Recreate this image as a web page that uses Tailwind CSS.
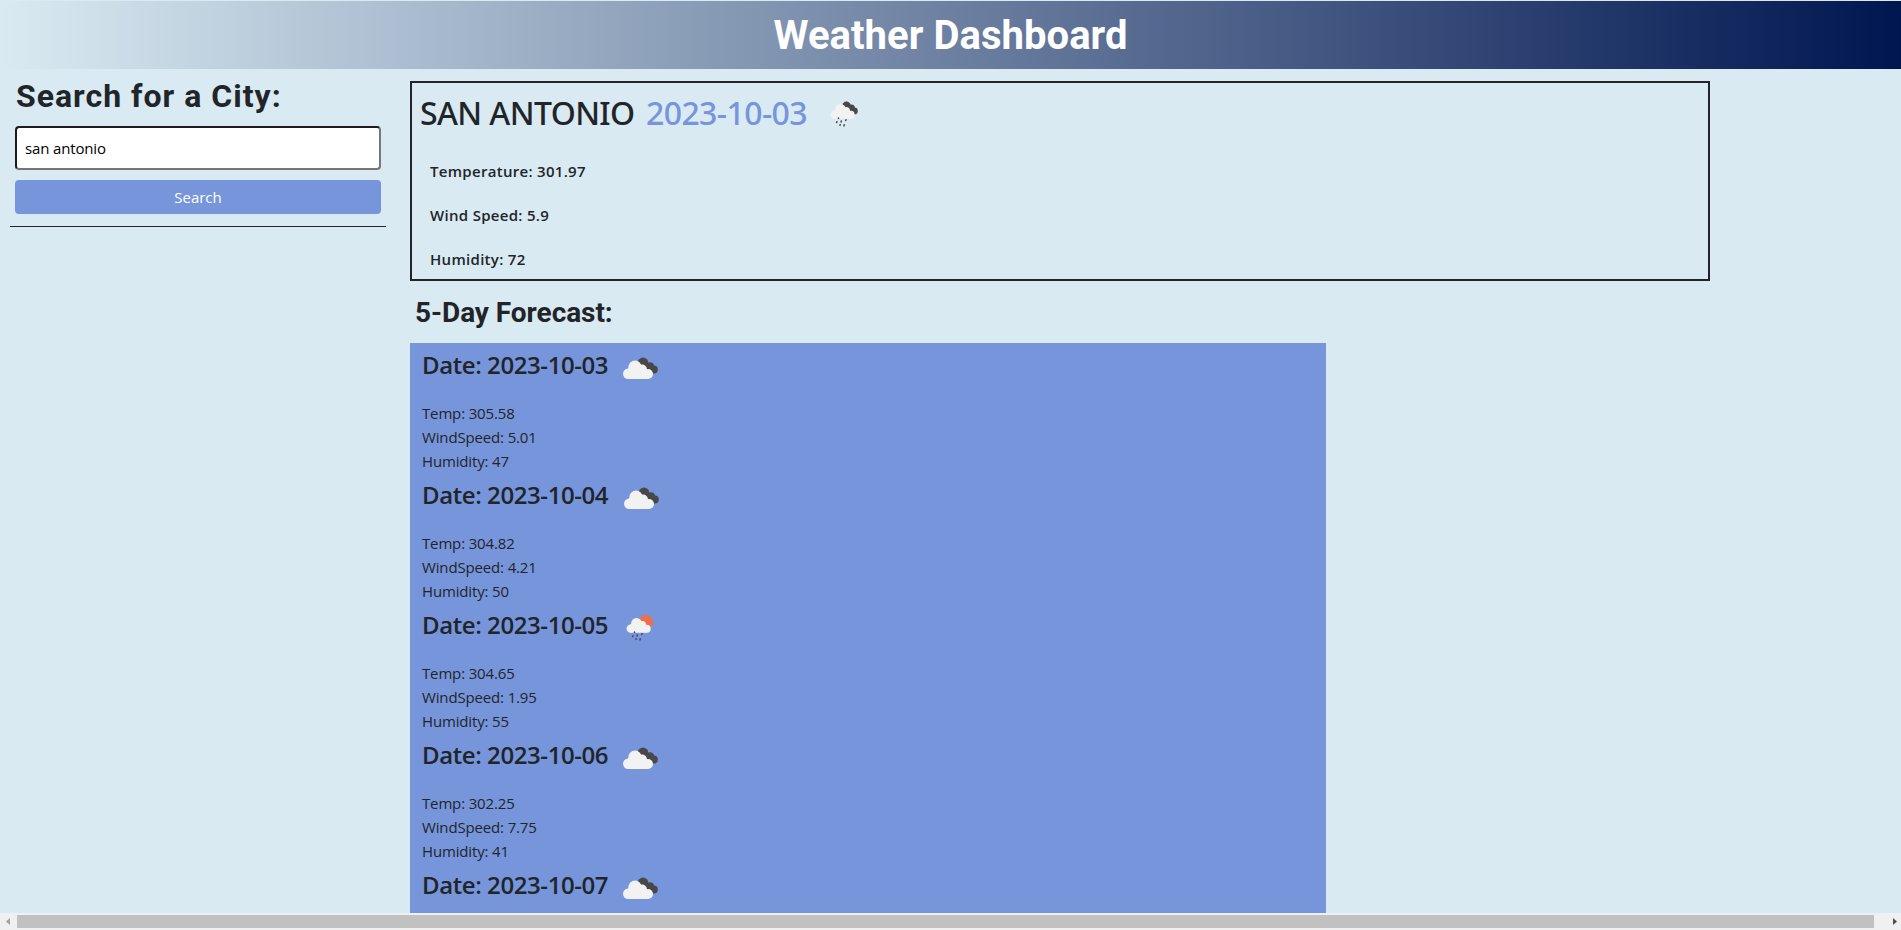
<!DOCTYPE html>
<html lang="en">
<head>
<meta charset="utf-8">
<title>Weather Dashboard</title>
<script src="https://cdn.jsdelivr.net/npm/@tailwindcss/browser@4"></script>
</head>
<body class="bg-[#d9eaf2] text-[#212529] font-['Open_Sans',sans-serif] overflow-hidden">
<svg class="hidden">
  <symbol id="clouds" viewBox="0 0 45 36">
    <g fill="#484849"><circle cx="25" cy="13" r="5.4"/><circle cx="32" cy="16.5" r="4.3"/><circle cx="35.8" cy="19.5" r="4"/><path d="M22 14L34 15L36 23L26 24Z"/></g>
    <g fill="#f2f2f2"><circle cx="10.2" cy="23.8" r="5.2"/><circle cx="17" cy="17.2" r="6.6"/><circle cx="24" cy="19.5" r="5"/><circle cx="30" cy="24" r="5"/><path d="M10 18H27L31 29H10Z"/></g>
  </symbol>
  <symbol id="cloud-small" viewBox="0 0 28 28">
    <g fill="#f2f2f2"><circle cx="4.7" cy="13.6" r="4.2"/><circle cx="10.5" cy="8.2" r="5.3"/><circle cx="16" cy="10" r="4"/><circle cx="20.7" cy="13.7" r="4"/><path d="M4.5 9H19L21 17.8H4.7Z"/></g>
    <g stroke="#484849" stroke-width="1.5" stroke-linecap="round"><path d="M8.5 17V17.6M6.9 20.8L6.6 21.6M11.3 20L11 20.9M16 18.8L15.7 19.5M10.2 23.6L10 24.2M14.2 23.8L14 24.9"/></g>
  </symbol>
</svg>
<div class="flex h-[930px] flex-col">
  <header class="mt-px h-[68px] shrink-0 bg-linear-to-r/srgb from-[#d9eaf2] to-[#001650] text-center font-[Roboto,sans-serif] text-[40px] leading-[69px] font-bold tracking-[0.05px] text-white">
    <h1>Weather Dashboard</h1>
  </header>
  <div class="flex min-h-0 flex-1 overflow-hidden">
    <aside class="w-[400px] shrink-0 pl-[10px]">
      <h2 class="mt-[7px] pl-1.5 font-[Roboto,sans-serif] text-[32px] leading-[40px] font-bold tracking-[1px]">Search for a City:</h2>
      <input class="mt-[10px] ml-[5px] block h-11 w-[366px] rounded-[4px] border-2 border-t-[#1c1c1e] border-l-[#1c1c1e] border-r-[#767676] border-b-[#767676] bg-white px-2 text-[15px] tracking-[-0.15px] text-black" value="san antonio">
      <button class="mt-[10px] ml-[5px] block h-[34px] w-[366px] rounded-[4px] bg-[#7795db] text-[15px] font-normal text-white">Search</button>
      <hr class="mt-3 w-[376px] border-[#212529]">
    </aside>
    <main class="ml-[10px] flex-1">
      <section class="mt-3 h-[200px] w-[1300px] border-2 border-[#212529] pl-[9px]">
        <div class="flex h-[60px] items-center font-['Noto_Sans',sans-serif] text-[32px] font-medium whitespace-pre"><h2 class="w-[226px] -ml-px tracking-[-0.6px]">SAN ANTONIO</h2><span class="w-[184px] tracking-[-0.6px] text-[#7795db]">2023-10-03</span>
<svg class="size-7 translate-y-[2px]"><g fill="#484849"><circle cx="16.5" cy="4.8" r="4.2"/><circle cx="21.3" cy="7.2" r="3.6"/><circle cx="24.4" cy="10" r="3.4"/><path d="M14 6L23 5L25 13L18 13Z"/></g><use href="#cloud-small"/></svg></div>
        <div class="mt-[16px] pl-[9px] text-[15px] font-semibold tracking-[0.3px]">
          <p class="h-11 leading-[44px] -mt-[10px]">Temperature: 301.97</p>
          <p class="h-11 leading-[44px]">Wind Speed: 5.9</p>
          <p class="h-11 leading-[44px]">Humidity: 72</p>
        </div>
      </section>
      <h2 class="mt-[14px] h-12 pl-[5px] font-[Roboto,sans-serif] text-[28px] leading-[35px] font-bold tracking-[-0.05px]">5-Day Forecast:</h2>
      <section class="w-[916px] bg-[#7795db] pl-3">
        <article class="h-[130px]">
          <div class="flex h-[58px] pt-[7px]"><h3 class="w-[196px] text-2xl leading-[30px] font-semibold tracking-[-0.42px]">Date: 2023-10-03</h3><svg class="h-9 w-[45px]"><use href="#clouds"/></svg></div>
          <p class="text-[15px] leading-6 tracking-[-0.15px]">Temp: 305.58</p><p class="text-[15px] leading-6 tracking-[-0.15px]">WindSpeed: 5.01</p><p class="text-[15px] leading-6 tracking-[-0.15px]">Humidity: 47</p>
        </article>
        <article class="h-[130px]">
          <div class="flex h-[58px] pt-[7px]"><h3 class="w-[197px] text-2xl leading-[30px] font-semibold tracking-[-0.42px]">Date: 2023-10-04</h3><svg class="h-9 w-[45px]"><use href="#clouds"/></svg></div>
          <p class="text-[15px] leading-6 tracking-[-0.15px]">Temp: 304.82</p><p class="text-[15px] leading-6 tracking-[-0.15px]">WindSpeed: 4.21</p><p class="text-[15px] leading-6 tracking-[-0.15px]">Humidity: 50</p>
        </article>
        <article class="h-[130px]">
          <div class="flex h-[58px] pt-[7px]"><h3 class="w-[204px] text-2xl leading-[30px] font-semibold tracking-[-0.42px]">Date: 2023-10-05</h3><svg class="mt-[5px] size-7"><circle cx="20" cy="7" r="7" fill="#ee6f4c"/><use href="#cloud-small"/></svg></div>
          <p class="text-[15px] leading-6 tracking-[-0.15px]">Temp: 304.65</p><p class="text-[15px] leading-6 tracking-[-0.15px]">WindSpeed: 1.95</p><p class="text-[15px] leading-6 tracking-[-0.15px]">Humidity: 55</p>
        </article>
        <article class="h-[130px]">
          <div class="flex h-[58px] pt-[7px]"><h3 class="w-[196px] text-2xl leading-[30px] font-semibold tracking-[-0.42px]">Date: 2023-10-06</h3><svg class="h-9 w-[45px]"><use href="#clouds"/></svg></div>
          <p class="text-[15px] leading-6 tracking-[-0.15px]">Temp: 302.25</p><p class="text-[15px] leading-6 tracking-[-0.15px]">WindSpeed: 7.75</p><p class="text-[15px] leading-6 tracking-[-0.15px]">Humidity: 41</p>
        </article>
        <article class="h-[50px]">
          <div class="flex h-[50px] pt-[7px]"><h3 class="w-[196px] text-2xl leading-[30px] font-semibold tracking-[-0.42px]">Date: 2023-10-07</h3><svg class="h-9 w-[45px]"><use href="#clouds"/></svg></div>
        </article>
      </section>
    </main>
  </div>
  <div class="flex h-[17px] shrink-0 items-center bg-[#f0f0f0]">
    <svg class="h-[17px] w-[17px]"><path d="M6 8.5L10 5V12Z" fill="#a3a3a3"/></svg>
    <div class="h-[13px] w-[1857px] bg-[#c1c1c1]"></div>
    <svg class="ml-[10px] h-[17px] w-[17px]"><path d="M13 8.5L9 5V12Z" fill="#505050"/></svg>
  </div>
</div>
</body>
</html>
